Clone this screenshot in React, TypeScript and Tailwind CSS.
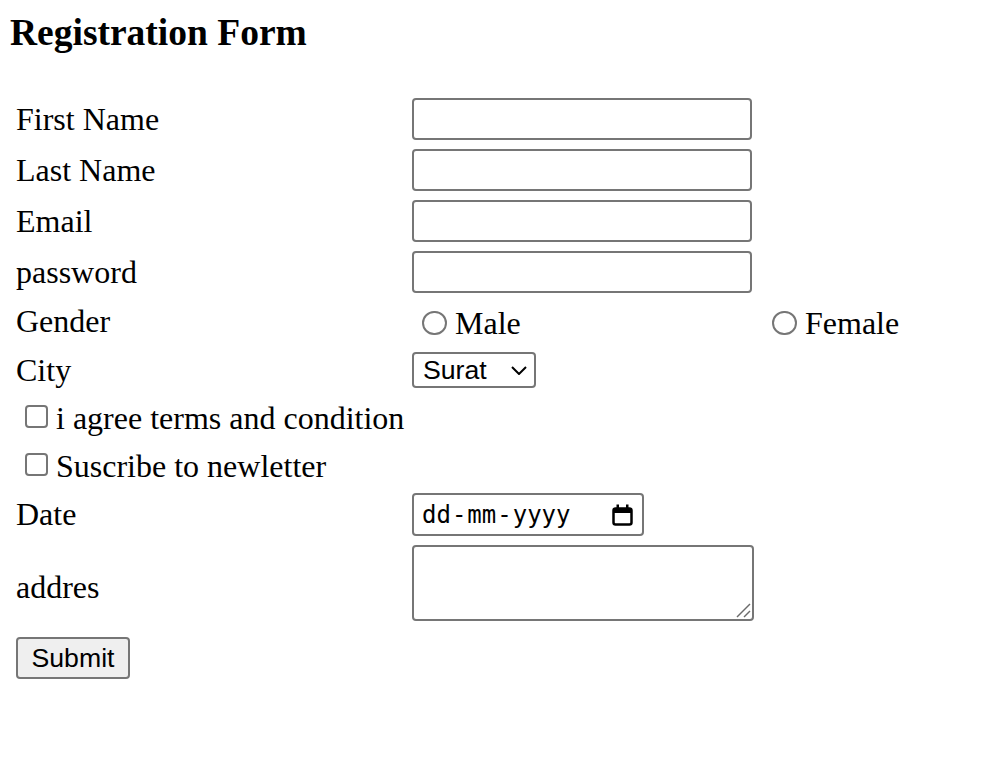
import React from "react";

const serif = "font-['Liberation_Serif',serif]";

function Label({ children }: { children: React.ReactNode }) {
  return <div className="w-[396px] shrink-0 text-[32px] leading-[37px]">{children}</div>;
}

function TextBox() {
  return (
    <input
      type="text"
      className="w-[340px] h-[42px] border-2 border-[#767676] rounded-[4px] bg-white outline-none"
    />
  );
}

function Radio() {
  return <span className="block w-[25px] h-[24px] rounded-full border-2 border-[#767676] bg-white shrink-0" />;
}

function Check() {
  return <span className="block w-[23px] h-[23px] rounded-[4px] border-2 border-[#767676] bg-white shrink-0" />;
}

export default function App() {
  return (
    <div className={`${serif} text-black bg-white w-[1005px] h-[769px] pl-[10px]`}>
      <h3 className="mt-[11px] text-[37.5px] leading-[43px] font-bold">Registration Form</h3>

      <div className="mt-[44px] pl-[6px] flex flex-col gap-[9px]">
        {["First Name", "Last Name", "Email", "password"].map((l) => (
          <div key={l} className="flex items-center h-[42px]">
            <Label>{l}</Label>
            <TextBox />
          </div>
        ))}

        {/* Gender */}
        <div className="flex items-start h-[41px]">
          <div className="mt-[1px]">
            <Label>Gender</Label>
          </div>
          <div className="w-[350px] flex items-start">
            <div className="ml-[10px] mt-[9px]">
              <Radio />
            </div>
            <span className="ml-[8px] mt-[3px] text-[32px] leading-[37px]">Male</span>
          </div>
          <div className="flex items-start">
            <div className="ml-[10px] mt-[9px]">
              <Radio />
            </div>
            <span className="ml-[8px] mt-[3px] text-[32px] leading-[37px]">Female</span>
          </div>
        </div>

        {/* City */}
        <div className="flex items-center h-[36px]">
          <Label>City</Label>
          <div className="w-[124px] h-[36px] border-2 border-[#767676] rounded-[4px] bg-white flex items-center justify-between pl-[9px] pr-[7px] font-['Liberation_Sans',Arial,sans-serif] text-[26.67px] leading-none">
            <span>Surat</span>
            <svg width="16" height="9" viewBox="0 0 16 9" className="mt-[1px]">
              <polyline points="1,1 8,8 15,1" fill="none" stroke="#000" strokeWidth="2" />
            </svg>
          </div>
        </div>

        {/* Checkboxes */}
        {["i agree terms and condition", "Suscribe to newletter"].map((t) => (
          <div key={t} className="flex items-start h-[39px]">
            <div className="ml-[9px] mt-[8px]">
              <Check />
            </div>
            <span className="ml-[8px] mt-[3px] text-[32px] leading-[37px]">{t}</span>
          </div>
        ))}

        {/* Date */}
        <div className="flex items-center h-[43px]">
          <Label>Date</Label>
          <div className="w-[232px] h-[43px] border-2 border-[#767676] rounded-[4px] bg-white flex items-center pl-[8px] pr-[9px] justify-between">
            <div className="flex items-center gap-[1px] font-['DejaVu_Sans_Mono',monospace] text-[24px] leading-none mt-[1px]">
              <span>dd</span>
              <span>-</span>
              <span>mm</span>
              <span>-</span>
              <span>yyyy</span>
            </div>
            <svg width="21" height="22" viewBox="0 0 21 22">
              <rect x="1.5" y="4.5" width="18" height="16" rx="2" fill="none" stroke="#000" strokeWidth="2.5" />
              <rect x="1.5" y="4.5" width="18" height="4.5" fill="#000" />
              <rect x="4.5" y="0.5" width="2.5" height="4.5" fill="#000" />
              <rect x="14" y="0.5" width="2.5" height="4.5" fill="#000" />
            </svg>
          </div>
        </div>

        {/* Address */}
        <div className="flex items-start h-[83px]">
          <div className="mt-[24px]">
            <Label>addres</Label>
          </div>
          <div className="relative w-[342px] h-[76px] border-2 border-[#767676] rounded-[4px] bg-white">
            <svg width="16" height="16" viewBox="0 0 16 16" className="absolute right-[1px] bottom-[1px]">
              <line x1="15" y1="2" x2="2" y2="15" stroke="#6b6b6b" strokeWidth="1.5" />
              <line x1="15" y1="9" x2="9" y2="15" stroke="#6b6b6b" strokeWidth="1.5" />
            </svg>
          </div>
        </div>

        {/* Submit */}
        <div className="flex">
          <button
            type="button"
            className="w-[114px] h-[42px] border-2 border-[#767676] rounded-[4px] bg-[#efefef] font-['Liberation_Sans',Arial,sans-serif] text-[26.67px] leading-none text-black"
          >
            Submit
          </button>
        </div>
      </div>
    </div>
  );
}
